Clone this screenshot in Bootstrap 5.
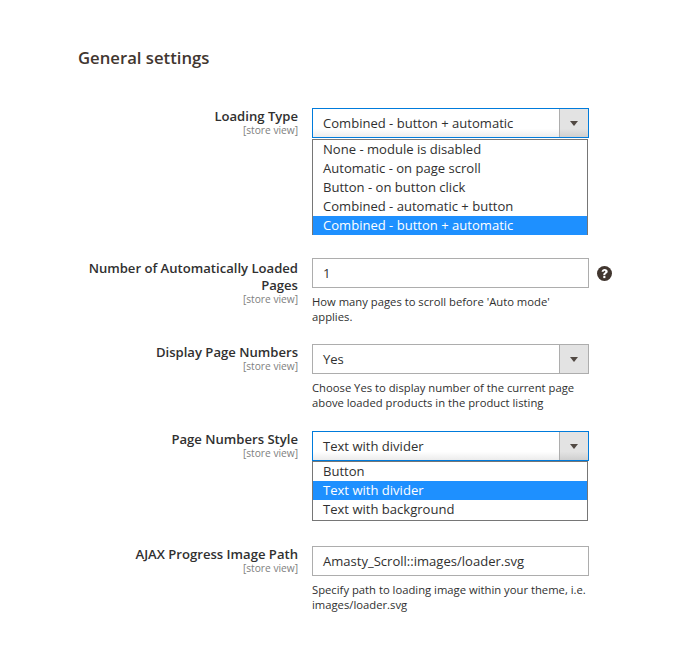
<!DOCTYPE html>
<html lang="en">
<head>
<meta charset="utf-8">
<title>General settings</title>
<link href="https://cdn.jsdelivr.net/npm/bootstrap@5.3.0/dist/css/bootstrap.min.css" rel="stylesheet">
<style>
body{font-family:"Open Sans",sans-serif;color:#303030;background:#fff;}
.sheet{width:685px;height:664px;overflow:hidden;padding:46px 0 0 78px;}
.sheet-title{font-size:16.7px;line-height:23px;font-weight:600;color:#41362f;margin:0 0 39px;}
.field-label{width:220px;text-align:right;flex:none;}
.label-low{padding-top:2px;}
.field-name{font-size:13.1px;line-height:17px;font-weight:600;color:#303030;}
.field-scope{font-size:10.2px;line-height:11px;color:#808080;}
.field-body{width:277px;margin-left:14px;flex:none;position:relative;}
.pick{height:30px;border:1px solid #adadad;display:flex;background:#fff;font-size:13.05px;line-height:28px;color:#303030;}
.pick-text{flex:1;padding-left:10px;}
.pick-arrow{width:29px;flex:none;background:#e3e3e3;border-left:1px solid #adadad;display:flex;align-items:center;justify-content:center;}
.pick-arrow::after{content:"";border-style:solid;border-width:5px 4px 0;border-color:#514943 transparent transparent;}
.pick-open{border-color:#007bdb;}
.pick-open .pick-text{background:linear-gradient(#fff 70%,#ececec);}
.pick-open .pick-arrow{background:linear-gradient(#e3e3e3 70%,#cfcfcf);}
.opts{border:1px solid #767676;width:276px;font-size:13.05px;line-height:19px;background:#fff;color:#303030;}
.opts-cut{border-bottom:0;margin-top:1px;}
.opts-full{padding-bottom:1px;}
.opt{height:19px;padding-left:10px;}
.opt-on{background:#1e90ff;color:#fff;}
.entry{height:30px;border:1px solid #adadad;font-size:13.05px;line-height:28px;padding-left:10px;color:#303030;background:#fff;}
.field-note{font-size:11.25px;line-height:15px;color:#303030;margin-top:6px;}
.help-mark{position:absolute;left:285px;top:8px;}
.row-1{margin-bottom:23px;}
.row-2{margin-bottom:20px;}
.row-3{margin-bottom:21px;}
.row-4{margin-bottom:25px;}
</style>
</head>
<body>
<main class="sheet">
<h1 class="sheet-title">General settings</h1>

<div class="d-flex row-1">
  <div class="field-label"><div class="field-name">Loading Type</div><div class="field-scope">[store view]</div></div>
  <div class="field-body">
    <div class="pick pick-open"><span class="pick-text">Combined - button + automatic</span><span class="pick-arrow"></span></div>
    <div class="opts opts-cut">
      <div class="opt">None - module is disabled</div>
      <div class="opt">Automatic - on page scroll</div>
      <div class="opt">Button - on button click</div>
      <div class="opt">Combined - automatic + button</div>
      <div class="opt opt-on">Combined - button + automatic</div>
    </div>
  </div>
</div>

<div class="d-flex row-2">
  <div class="field-label label-low"><div class="field-name">Number of Automatically Loaded Pages</div><div class="field-scope">[store view]</div></div>
  <div class="field-body">
    <div class="entry">1</div>
    <svg class="help-mark" width="15" height="15" viewBox="0 0 15 15" aria-hidden="true"><circle cx="7.5" cy="7.5" r="7.5" fill="#41362f"/><path d="M4.6 5.7c.1-1.7 1.4-2.8 3.1-2.8 1.7 0 3 1 3 2.5 0 1.1-.7 1.7-1.4 2.2-.6.4-.9.7-.9 1.2v.4H6.3v-.6c0-1 .5-1.5 1.1-1.9.6-.4.9-.7.9-1.2 0-.4-.3-.7-.8-.7s-.8.3-.9 1z" fill="#fff"/><rect x="6.3" y="10" width="2.1" height="2.1" fill="#fff"/></svg>
    <div class="field-note">How many pages to scroll before 'Auto mode' applies.</div>
  </div>
</div>

<div class="d-flex row-3">
  <div class="field-label"><div class="field-name">Display Page Numbers</div><div class="field-scope">[store view]</div></div>
  <div class="field-body">
    <div class="pick"><span class="pick-text">Yes</span><span class="pick-arrow"></span></div>
    <div class="field-note">Choose Yes to display number of the current page above loaded products in the product listing</div>
  </div>
</div>

<div class="d-flex row-4">
  <div class="field-label"><div class="field-name">Page Numbers Style</div><div class="field-scope">[store view]</div></div>
  <div class="field-body">
    <div class="pick pick-open"><span class="pick-text">Text with divider</span><span class="pick-arrow"></span></div>
    <div class="opts opts-full">
      <div class="opt">Button</div>
      <div class="opt opt-on">Text with divider</div>
      <div class="opt">Text with background</div>
    </div>
  </div>
</div>

<div class="d-flex">
  <div class="field-label"><div class="field-name">AJAX Progress Image Path</div><div class="field-scope">[store view]</div></div>
  <div class="field-body">
    <div class="entry">Amasty_Scroll::images/loader.svg</div>
    <div class="field-note">Specify path to loading image within your theme, i.e. images/loader.svg</div>
  </div>
</div>
</main>
</body>
</html>
